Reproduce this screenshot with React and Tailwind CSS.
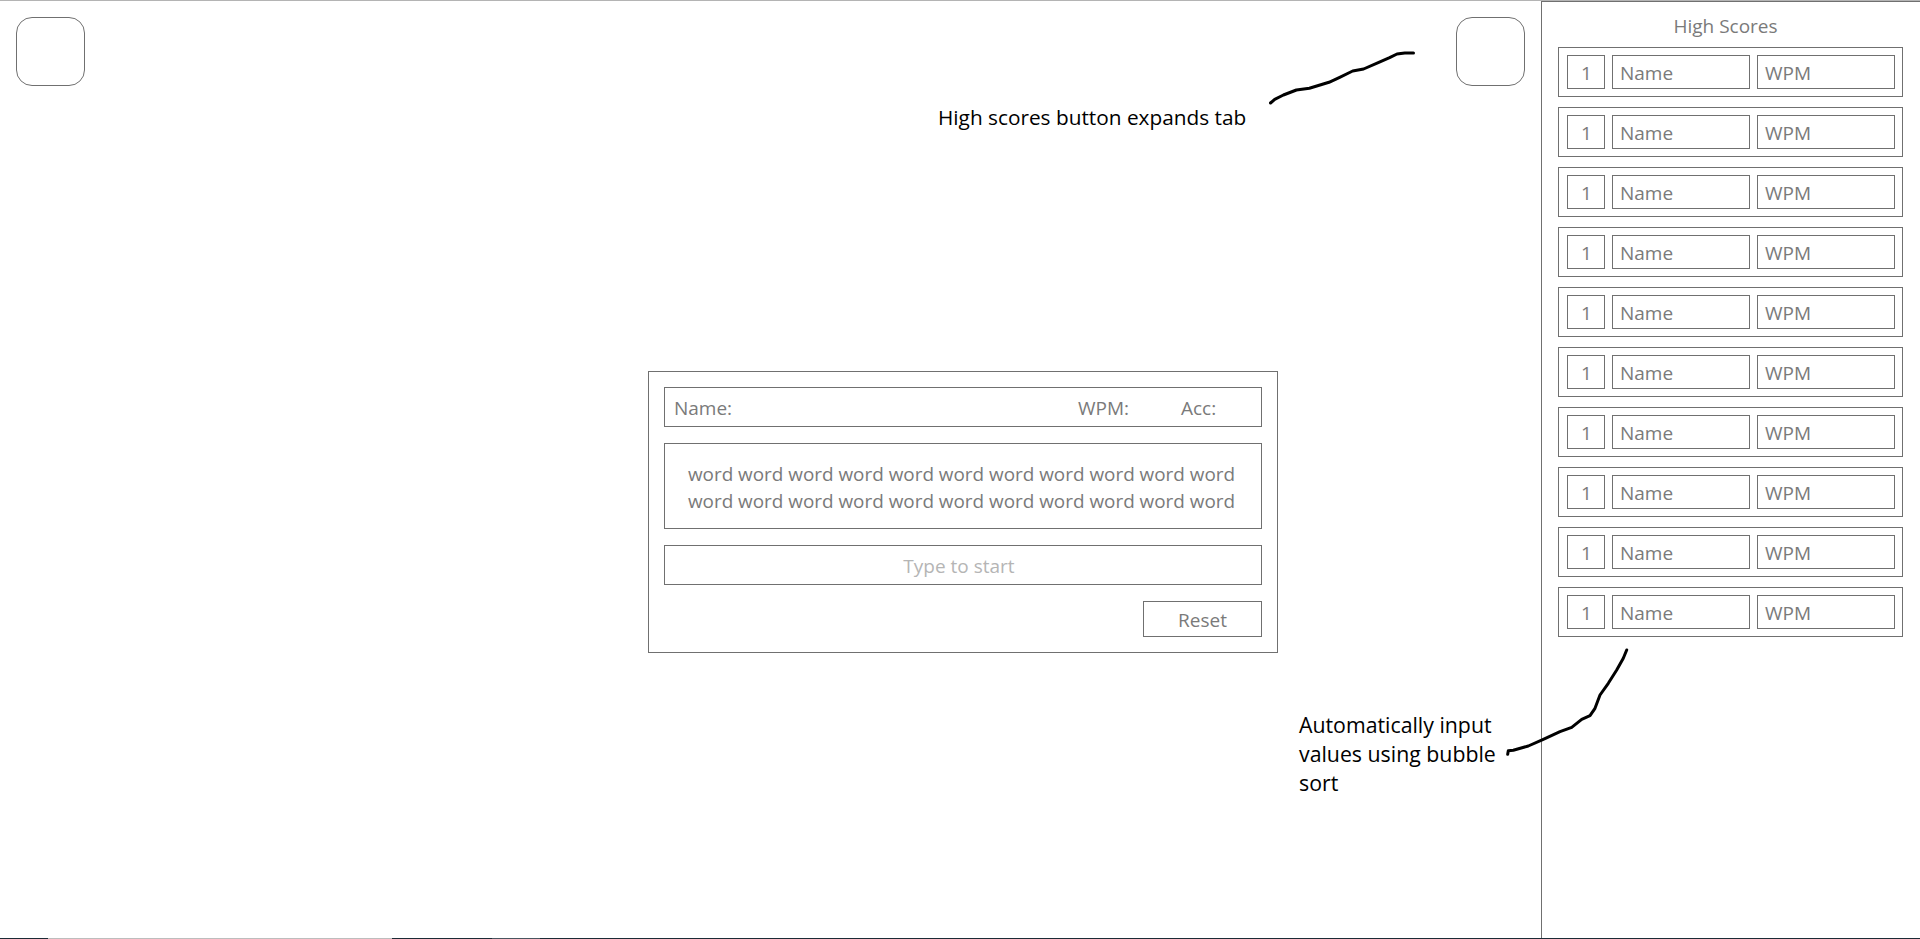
const scribble1 = "M1270.5 103 L1274.7 99.3 L1283.4 95 L1296.4 90 L1309.4 88.3 L1329 82.3 L1339.7 77.3 L1352.7 71 L1363.6 69 L1378.8 62.3 L1389.6 57.7 L1397 54 L1404.8 53 L1413.5 53";
const scribble2 = "M1626.7 650 L1623.3 658.3 L1616.7 670 L1608.3 683.3 L1600 695 L1595 708.3 L1590 715.7 L1581.7 719.3 L1571.7 727.3 L1560 731.7 L1543.3 739.3 L1528.3 746 L1513.3 750.3 L1508.3 750.7 L1507.7 754.3";

function ScoreRow() {
  return (
    <div className="flex h-[50px] w-[345px] gap-[7px] border border-[#707070] py-[7px] pl-2 pr-[7px]">
      <div className="flex w-[38px] items-center justify-center border border-[#707070] pl-[1px] pt-[3px]">1</div>
      <div className="flex w-[138px] items-center border border-[#707070] pl-[7px] pt-[3px]">Name</div>
      <div className="flex w-[138px] items-center border border-[#707070] pl-[7px] pt-[3px]">WPM</div>
    </div>
  );
}

const words = "word word word word word word word word word word word";

export default function App() {
  return (
    <div className="relative flex h-screen w-full flex-col overflow-hidden bg-white font-['Open_Sans',sans-serif] text-[19px] text-[#7a7a7a]">
      <div className="h-px shrink-0 bg-[#b4b4b4]" />
      <div className="flex min-h-0 flex-1">
        <main className="w-[1541px] shrink-0">
          <div className="flex justify-between px-4 pt-4">
            <button className="h-[69px] w-[69px] rounded-[16px] border border-[#707070]" />
            <button className="h-[69px] w-[69px] rounded-[16px] border border-[#707070]" />
          </div>
          <section className="ml-[648px] mt-[285px] flex h-[282px] w-[630px] flex-col border border-[#707070] px-[15px] pt-[15px]">
            <div className="flex h-10 w-[598px] shrink-0 items-center border border-[#707070] pl-[9px] pt-[3px]">
              <span className="w-[404px]">Name:</span>
              <span className="w-[103px]">WPM:</span>
              <span>Acc:</span>
            </div>
            <div className="mt-4 flex h-[86px] w-[598px] shrink-0 flex-col items-center justify-center border border-[#707070] pr-[3px] pt-[4px] text-[18.9px] leading-[27px]">
              <div>{words}</div>
              <div>{words}</div>
            </div>
            <div className="mt-4 flex h-10 w-[598px] shrink-0 items-center justify-center border border-[#707070] pr-[8px] pt-[3px] text-[#b5b5b5]">
              Type to start
            </div>
            <button className="ml-[479px] mt-4 h-[36px] w-[119px] border border-[#707070] pt-[2px]">Reset</button>
          </section>
        </main>
        <aside className="flex w-[379px] shrink-0 flex-col gap-[10px] border-l border-t border-[#707070] pl-4">
          <h2 className="-mb-[10px] flex h-[45px] w-[345px] items-center justify-center pr-[10px] pt-[3px] font-normal">High Scores</h2>
          {Array.from({ length: 10 }, (_, i) => <ScoreRow key={i} />)}
        </aside>
      </div>
      <div className="flex h-px shrink-0">
        <div className="w-12 bg-[#1c2b36]" />
        <div className="w-[344px] bg-[#bdbdbd]" />
        <div className="w-[100px] bg-[#1c2b36]" />
        <div className="w-12 bg-[#4a5660]" />
        <div className="flex-1 bg-[#1c2b36]" />
      </div>

      <p className="absolute left-[938px] top-[103px] text-[20.8px] leading-[29px] text-black">High scores button expands tab</p>
      <p className="absolute left-[1299px] top-[710px] w-[205px] text-[21.3px] leading-[29px] text-black">Automatically input values using bubble sort</p>
      <svg className="pointer-events-none absolute left-0 top-0" width="1920" height="939" fill="none" stroke="#000" strokeWidth="3" strokeLinecap="round" strokeLinejoin="round">
        <path d={scribble1} />
        <path d={scribble2} />
      </svg>
    </div>
  );
}
